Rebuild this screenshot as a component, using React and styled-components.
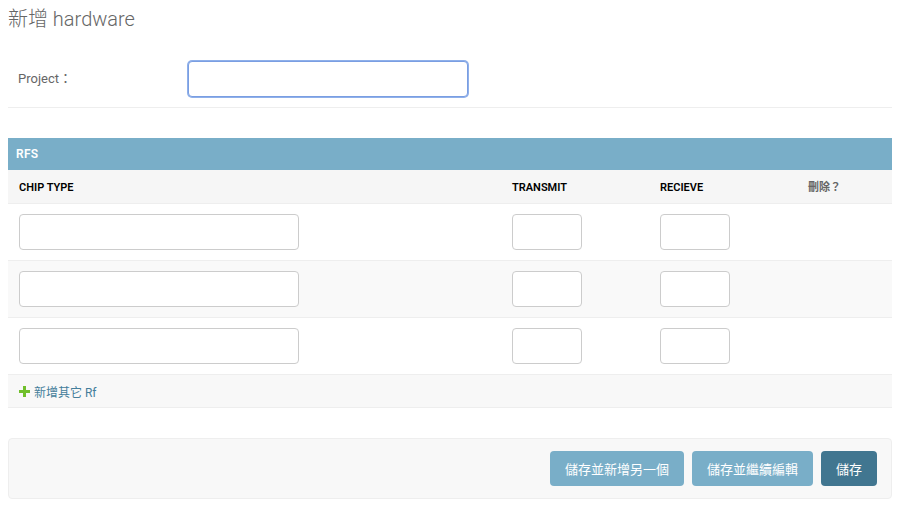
import React from 'react';
import styled, { createGlobalStyle } from 'styled-components';

const GlobalStyle = createGlobalStyle`
    body {
        margin: 0;
        background: #fff;
        font-family: Roboto, "Liberation Sans", "Noto Sans CJK TC", sans-serif;
        font-size: 13px;
        color: #333;
    }
`

const Page = styled.div`
    padding: 6px 16px 16px 8px;
`

const Title = styled.h1`
    margin: 0;
    font-size: 20px;
    font-weight: 300;
    color: #666;
    line-height: 26px;
`

const FormRow = styled.div`
    display: flex;
    align-items: center;
    margin-top: 19px;
    padding: 10px;
    border-bottom: 1px solid #eee;
`

const Label = styled.label`
    width: 170px;
    color: #666;
    font-size: 13px;
    margin-top: -3px;
`

const TextInput = styled.input`
    box-sizing: border-box;
    width: ${p => p.width || '280px'};
    height: 36px;
    padding: 5px 8px;
    border: 1px solid ${p => p.focused ? '#7a9ee2' : '#ccc'};
    box-shadow: ${p => p.focused ? '0 0 0 1px #8fb0ea' : 'none'};
    border-radius: 4px;
    background: #fff;
    font-family: inherit;
    font-size: 13px;
    outline: none;
    caret-color: #000;
`

const Module = styled.section`
    margin-top: 30px;
`

const ModuleTitle = styled.h2`
    margin: 0;
    height: 32px;
    line-height: 32px;
    padding: 0 8px;
    background: #79aec8;
    color: #fff;
    font-size: 12px;
    font-weight: 600;
    letter-spacing: 0.3px;
`

const Row = styled.div`
    display: grid;
    grid-template-columns: 493px 148px 148px 1fr;
    align-items: center;
    background: ${p => p.bg || '#fff'};
    border-bottom: 1px solid #eee;
`

const HeadCell = styled.div`
    padding: 0 11px;
    height: 33px;
    line-height: 35px;
    font-size: 11px;
    font-weight: 600;
    color: ${p => p.quiet ? '#666' : '#000'};
    text-transform: uppercase;
`

const Cell = styled.div`
    padding: 10px 11px;
`

const AddRow = styled.div`
    height: 32px;
    display: flex;
    align-items: center;
    padding: 0 11px;
    background: #f8f8f8;
    border-bottom: 1px solid #eee;
`

const AddLink = styled.a`
    display: flex;
    align-items: center;
    gap: 4px;
    color: #447e9b;
    font-size: 12px;
    font-weight: 400;
    text-decoration: none;
`

const SubmitRow = styled.div`
    display: flex;
    justify-content: flex-end;
    gap: 8px;
    margin-top: 30px;
    padding: 12px 14px;
    background: #f8f8f8;
    border: 1px solid #eee;
    border-radius: 4px;
`

const Button = styled.button`
    height: 35px;
    padding: 0 15px;
    border: none;
    border-radius: 4px;
    background: ${p => p.primary ? '#417690' : '#79aec8'};
    color: #fff;
    font-family: inherit;
    font-size: 13px;
`

const Plus = () => (
    <svg width="11" height="11" viewBox="0 0 11 11">
        <path d="M4 0h3v4h4v3H7v4H4V7H0V4h4z" fill="#70bf2b" />
    </svg>
)

const App = () => {
    const rows = ['#fff', '#f9f9f9', '#fff']
    return (
        <Page>
            <GlobalStyle />
            <Title>新增 hardware</Title>
            <FormRow>
                <Label>Project：</Label>
                <TextInput focused autoFocus />
            </FormRow>
            <Module>
                <ModuleTitle>RFS</ModuleTitle>
                <Row bg="#f6f6f6">
                    <HeadCell>Chip type</HeadCell>
                    <HeadCell>Transmit</HeadCell>
                    <HeadCell>Recieve</HeadCell>
                    <HeadCell quiet>刪除？</HeadCell>
                </Row>
                {rows.map((bg, i) => (
                    <Row key={i} bg={bg}>
                        <Cell><TextInput /></Cell>
                        <Cell><TextInput width="70px" /></Cell>
                        <Cell><TextInput width="70px" /></Cell>
                        <Cell />
                    </Row>
                ))}
                <AddRow>
                    <AddLink href="#"><Plus />新增其它 Rf</AddLink>
                </AddRow>
            </Module>
            <SubmitRow>
                <Button>儲存並新增另一個</Button>
                <Button>儲存並繼續編輯</Button>
                <Button primary>儲存</Button>
            </SubmitRow>
        </Page>
    )
}

export default App;
